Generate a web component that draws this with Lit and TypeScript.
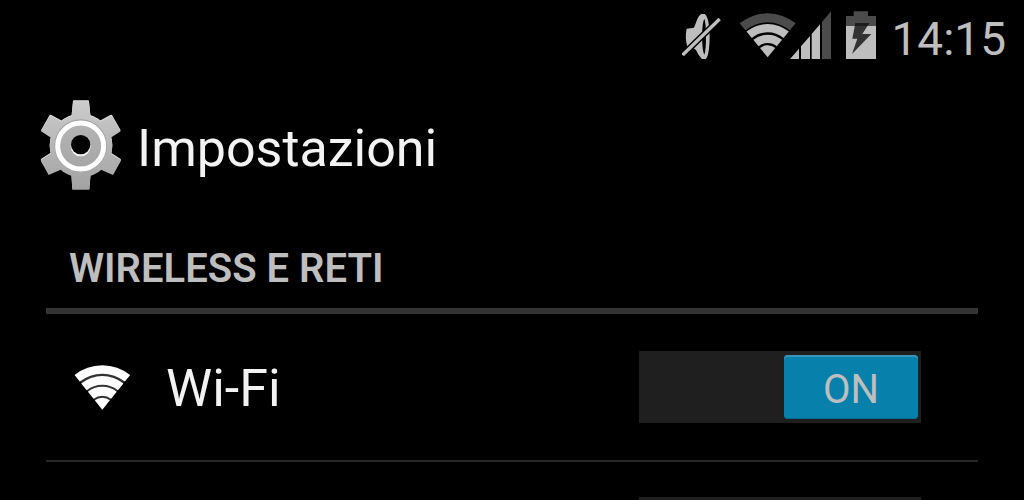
import { LitElement, html, css } from "lit";
import { customElement, property } from "lit/decorators.js";

/** Point on a circle round (cx, cy), angle in degrees clockwise from straight up. */
const polar = (cx: number, cy: number, r: number, deg: number): string => {
  const a = (deg * Math.PI) / 180;
  return `${(cx + r * Math.sin(a)).toFixed(2)} ${(cy - r * Math.cos(a)).toFixed(2)}`;
};

/** Slice of a fan between two radii, apex at (cx, cy). */
const fan = (cx: number, cy: number, outer: number, inner: number, half: number): string =>
  inner > 0
    ? `M${polar(cx, cy, outer, -half)}A${outer} ${outer} 0 0 1 ${polar(cx, cy, outer, half)}L${polar(cx, cy, inner, half)}A${inner} ${inner} 0 0 0 ${polar(cx, cy, inner, -half)}Z`
    : `M${polar(cx, cy, outer, -half)}A${outer} ${outer} 0 0 1 ${polar(cx, cy, outer, half)}L${cx} ${cy}Z`;

@customElement("status-bar")
export class StatusBar extends LitElement {
  static styles = css`
    :host {
      display: flex;
      align-items: center;
      justify-content: flex-end;
      box-sizing: border-box;
      height: 75px;
      padding: 0 18px 3px 0;
      color: #bebebe;
      font-size: 46px;
      line-height: 56px;
    }
    svg {
      display: block;
      flex: none;
    }
    .mute {
      margin-right: 18px;
    }
    .wifi {
      margin-right: -6px;
    }
    .battery {
      margin: 0 14px;
    }
    time {
      padding-top: 6px;
    }
  `;

  render() {
    return html`
      <svg class="mute" width="40" height="50" viewBox="36 33 120 150" aria-hidden="true">
        <path fill="#bebebe" fill-rule="evenodd" d="M94 42H104Q118 52 119 110Q118 168 107 177H96Q86 168 78 150L66 142L52 140Q44 112 50 86L72 83L80 62Q86 46 94 42ZM103 56Q97 66 96 110Q97 154 103 164Q108 152 108 110Q108 68 103 56Z" />
        <path stroke="#000" stroke-width="19" d="M36 167L152 54" />
        <path stroke="#bebebe" stroke-width="10" d="M38 165L149 57" />
      </svg>
      <svg class="wifi" width="56" height="50" viewBox="210 33 168 150" aria-hidden="true">
        <path fill="#4b4b4b" d=${fan(293, 172, 132, 105, 39.4)} />
        <path fill="#bebebe" d=${fan(293, 172, 100, 75, 39.4)} />
        <path fill="#bebebe" d=${fan(293, 172, 68, 43, 39.4)} />
        <path fill="#bebebe" d=${fan(293, 172, 36, 0, 39.4)} />
      </svg>
      <svg width="41" height="50" viewBox="360 33 123 150" aria-hidden="true">
        <path fill="#bebebe" d="M360 177L387 146V177ZM393 177V139L420 108V177ZM425 177V102L450 73V177Z" />
        <path fill="#4b4b4b" d="M456 177V66L483 34V177Z" />
      </svg>
      <svg class="battery" width="32" height="50" viewBox="30 33 96 150" aria-hidden="true">
        <path fill="#4b4b4b" d="M33 78V48H56V34H99V48H123V78Z" />
        <path fill="#bebebe" d="M33 78H123V177H33Z" />
        <path fill="#333" d="M61 69H103L82 102H109L51 162L67 116H52Z" />
        <path fill="#1d1d1d" d="M61 69H103L97 78H59Z" />
      </svg>
      <time datetime="14:15">14:15</time>
    `;
  }
}

@customElement("on-off-switch")
export class OnOffSwitch extends LitElement {
  @property({ type: Boolean }) checked = false;
  @property() label = "";

  static styles = css`
    label {
      display: grid;
      align-items: center;
      width: 282px;
      height: 72px;
      cursor: pointer;
    }
    .track,
    .thumb {
      grid-area: 1 / 1;
      box-sizing: border-box;
    }
    .track {
      appearance: none;
      width: 100%;
      height: 100%;
      margin: 0;
      background: #1f1f1f;
    }
    .thumb {
      justify-self: start;
      width: 134px;
      height: 64px;
      margin: 0 3px;
      border-radius: 4px;
      background: #3a3a3a;
      box-shadow: inset 0 2px #4c4c4c;
      color: #bebebe;
      font-size: 40px;
      line-height: 70px;
      text-align: center;
      pointer-events: none;
    }
    .track:checked + .thumb {
      justify-self: end;
      background: #0780ab;
      box-shadow: inset 0 2px #3797bb, inset 0 -1px #066c90;
    }
  `;

  private toggle(e: Event) {
    this.checked = (e.target as HTMLInputElement).checked;
  }

  render() {
    return html`
      <label>
        <input class="track" type="checkbox" role="switch" aria-label=${this.label} .checked=${this.checked} @change=${this.toggle} />
        <span class="thumb">${this.checked ? "ON" : ""}</span>
      </label>
    `;
  }
}

@customElement("app-root")
export class AppRoot extends LitElement {
  static styles = css`
    :host {
      display: block;
      height: 100vh;
      overflow: hidden;
      background: #000;
      color: #f3f3f3;
      font-family: Roboto, sans-serif;
    }
    svg {
      display: block;
      flex: none;
    }
    .title-bar {
      display: flex;
      align-items: center;
      gap: 14px;
      height: 144px;
      padding-left: 39px;
    }
    h1 {
      margin: 0;
      padding-top: 4px;
      font-size: 52px;
      font-weight: 400;
      line-height: 64px;
    }
    .settings {
      margin: 0 46px;
    }
    h2 {
      margin: 0;
      padding: 26px 23px 15px;
      border-bottom: 6px solid #333;
      color: #bebebe;
      font-size: 40px;
      font-weight: 600;
      line-height: 48px;
    }
    ul {
      margin: 0;
      padding: 0;
      list-style: none;
    }
    li {
      display: flex;
      align-items: center;
      gap: 36px;
      height: 146px;
      padding: 0 57px 0 28px;
    }
    li + li {
      box-shadow: inset 0 2px #262626;
    }
    .name {
      padding-top: 4px;
      font-size: 52px;
      line-height: 64px;
    }
    on-off-switch {
      margin-left: auto;
    }
  `;

  private gear() {
    return html`
      <svg width="84" height="96" viewBox="27 28 252 288" aria-hidden="true">
        <defs>
          <linearGradient id="metal" gradientUnits="userSpaceOnUse" x1="0" y1="30" x2="0" y2="300">
            <stop offset="0" stop-color="#cccccc" />
            <stop offset="1" stop-color="#a2a2a2" />
          </linearGradient>
          <linearGradient id="hub" x1="0" y1="0" x2="0" y2="1">
            <stop offset="0" stop-color="#b4b4b4" />
            <stop offset="1" stop-color="#a6a6a6" />
          </linearGradient>
          <g id="body">
            <path d="M124 84L129 34Q129 32 132 32H174Q177 32 177 35L182 84ZM124 250H182L178 297H127Z" />
            <path d="M33 122L59 76Q61 74 64 76L104 98L70 146ZM272 122L246 76Q244 74 241 76L201 98L235 146Z" />
            <path d="M33 212Q31 209 34 207L70 184L104 232L56 253ZM272 212Q274 209 271 207L235 184L201 232L249 253Z" />
            <circle cx="153" cy="166" r="94" />
          </g>
        </defs>
        <use href="#body" fill="#e4e4e4" />
        <use href="#body" fill="url(#metal)" transform="translate(0 3)" />
        <circle cx="152" cy="168" r="79" fill="#a4a4a4" />
        <circle cx="152" cy="169" r="69" fill="url(#hub)" stroke="#fff" stroke-width="15" />
        <circle cx="152" cy="170" r="30" fill="#f4f4f4" />
        <circle cx="152" cy="165" r="29" />
      </svg>
    `;
  }

  render() {
    return html`
      <status-bar></status-bar>
      <header class="title-bar">
        ${this.gear()}
        <h1>Impostazioni</h1>
      </header>
      <main class="settings">
        <h2>WIRELESS E RETI</h2>
        <ul>
          <li>
            <svg width="56" height="48" viewBox="102 58 168 144" aria-hidden="true">
              <path fill="#333" d=${fan(187, 198, 130, 0, 38)} />
              <path fill="#fff" d=${fan(187, 198, 133, 108, 38.8)} />
              <path fill="#fff" d=${fan(187, 198, 101, 75, 38.8)} />
              <path fill="#fff" d=${fan(187, 198, 69, 42, 38.8)} />
              <path fill="#fff" d=${fan(187, 198, 36, 0, 38.8)} />
            </svg>
            <span class="name">Wi-Fi</span>
            <on-off-switch label="Wi-Fi" checked></on-off-switch>
          </li>
          <li>
            <on-off-switch></on-off-switch>
          </li>
        </ul>
      </main>
    `;
  }
}
